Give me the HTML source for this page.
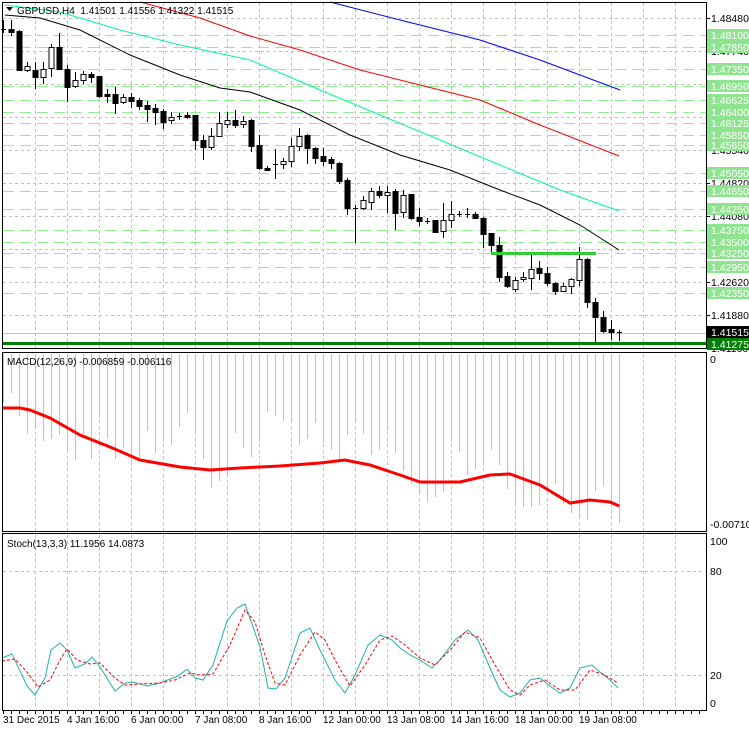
<!DOCTYPE html>
<html><head><meta charset="utf-8"><style>
html,body{margin:0;padding:0;background:#fff;width:749px;height:731px;overflow:hidden}
svg{display:block}
text{font-family:"Liberation Sans",sans-serif;font-size:10px}
text.ax{font-size:10.5px}
</style></head><body>
<svg id="s" width="749" height="731" xmlns="http://www.w3.org/2000/svg"></svg>
<script>
const S=document.getElementById('s');let h='';
const add=s=>h+=s;
const line=(x1,y1,x2,y2,c,w,d)=>add(`<line x1="${x1}" y1="${y1}" x2="${x2}" y2="${y2}" stroke="${c}" stroke-width="${w||1}" ${d?`stroke-dasharray="${d}"`:''}/>`);
const pl=(pts,c,w,d)=>add(`<polyline fill="none" points="${pts.map(p=>p.join(',')).join(' ')}" stroke="${c}" stroke-width="${w||1}" ${d?`stroke-dasharray="${d}"`:''}/>`);
const txt=(x,y,t,c,a)=>add(`<text x="${x}" y="${y}" fill="${c||'#000'}" ${a||''}>${t}</text>`);
const ax=(x,y,t,c)=>txt(x,y,t,c,'class="ax"');
for(let x=35;x<706;x+=32){line(x+.5,3,x+.5,348,'#c0c0c0',1,'3,3');line(x+.5,354,x+.5,531,'#c0c0c0',1,'3,3');line(x+.5,535,x+.5,709,'#c0c0c0',1,'3,3');}
const pr=['1.48480','1.47740','1.47000','1.46260','1.45540','1.44820','1.44080','1.43340','1.42620','1.41880','1.41160'];
pr.forEach((p,i)=>{let y=18+i*33;line(3,y+.5,706,y+.5,'#c0c0c0',1,'3,3');});
const lv=[['1.48100',35],['1.47850',47],['1.47350',69],['1.46950',86],['1.46625',100],['1.46400',112],['1.46125',123],['1.45850',135],['1.45650',145],['1.45050',173],['1.44650',191],['1.44250',209],['1.43750',230],['1.43500',242],['1.43250',253],['1.42950',267],['1.42350',293]];
lv.forEach(l=>line(3,l[1]+.5,706,l[1]+.5,'#90ee90',1,'11,6'));
line(3,333.5,706,333.5,'#c0c0c0',1);
pl([[330,2],[400,20],[480,40],[540,60],[580,75],[620,90]],'#0000ff');
pl([[140,2],[200,18],[250,36],[300,50],[360,70],[420,85],[480,100],[540,125],[619,156]],'#ff0000');
pl([[5,5],[60,12],[120,30],[180,45],[250,60],[320,90],[380,115],[440,140],[500,165],[560,190],[619,211]],'#00fa9a');
pl([[5,15],[40,18],[80,30],[130,55],[180,75],[220,88],[250,92],[300,110],[350,135],[400,155],[450,170],[500,190],[540,205],[580,225],[619,250]],'#000');
const C=[[30,29,20,33],[29,32,20,36],[31,70,30,70],[70,66,62,72],[70,77,62,89],[77,69,62,84],[68,47,44,77],[47,69,33,69],[69,87,65,102],[86,80,72,88],[80,74,71,84],[74,77,72,83],[76,96,76,98],[94,96,89,103],[94,103,87,114],[102,97,94,104],[97,101,93,108],[100,106,98,110],[105,109,101,122],[108,112,104,125],[111,122,109,129],[120,117,112,124],[116,117,113,120],[115,117,112,119],[115,140,115,150],[140,147,135,160],[147,136,128,150],[136,123,112,137],[124,120,112,128],[120,125,110,128],[124,121,116,128],[120,146,119,152],[145,168,135,170],[168,170,166,170],[164,165,149,179],[164,161,158,169],[161,146,138,167],[146,136,128,151],[135,148,134,164],[148,158,147,164],[156,161,148,166],[159,163,157,169],[163,181,162,184],[180,208,178,215],[208,209,205,243],[208,200,196,210],[202,191,188,210],[191,195,186,198],[195,192,186,213],[191,213,189,230],[212,195,190,218],[194,218,194,220],[217,221,208,226],[221,222,218,224],[220,232,220,233],[231,220,203,238],[220,214,201,228],[214,215,211,217],[215,214,208,218],[214,218,212,219],[218,234,217,248],[233,245,233,255],[245,277,237,282],[276,286,272,288],[289,280,277,292],[279,277,272,282],[278,269,255,290],[268,273,261,280],[273,283,267,286],[283,291,282,295],[291,286,283,292],[286,279,278,294],[280,259,247,286],[259,302,258,308],[302,317,298,343],[317,331,311,333],[329,332,320,340],[332,332,330,341]];
C.forEach((c,i)=>{const x=3+8*i;const [o,cl,hi,lo]=c;line(x+.5,hi,x+.5,lo,'#000');const t=Math.min(o,cl),b=Math.max(o,cl);
if(b-t<1.5)line(x-2,t+.5,x+3,t+.5,'#000');else add(`<rect x="${x-2}" y="${t+.5}" width="5" height="${b-t}" fill="${cl<o?'#fff':'#000'}" stroke="#000"/>`);});
line(491,253.5,596,253.5,'#32cd32',3);
line(3,343.5,706,343.5,'#008000',3);
const sig=[[3,408],[20,408],[30,410],[50,418],[80,435],[110,447],[140,460],[180,467],[210,470],[240,468],[280,466],[320,463],[345,460],[370,465],[400,475],[420,482],[460,482],[490,475],[510,474],[540,485],[570,503],[590,500],[610,502],[619,506]];
const sy=x=>{for(let k=1;k<sig.length;k++)if(x<=sig[k][0]){const a=sig[k-1],b=sig[k];return a[1]+(b[1]-a[1])*(x-a[0])/(b[0]-a[0]);}return 506;};
const off=[-5,-15,8,25,14,26,20,12,24,28,-2,20,-25,-8,10,-5,8,0,-30,-10,-25,-20,-40,-55,-35,-10,18,12,5,-35,-20,-10,-25,-55,-50,-45,-45,-20,-25,-40,-20,-12,0,-25,-40,-30,-10,-18,-40,-20,-5,5,12,20,15,10,-40,-30,-5,-10,-15,-25,-10,15,30,28,25,20,0,-10,5,10,15,20,-10,-15,5,17];
for(let i=0;i<78;i++){const x=3+8*i;line(x+.5,354,x+.5,Math.round(sy(x)+off[i]),'#c0c0c0',1);}
pl(sig,'#ff0000',3);
line(3,571.5,706,571.5,'#c0c0c0',1,'3,3');line(3,675.5,706,675.5,'#c0c0c0',1,'3,3');
pl([[2,658],[12,654],[27,686],[35,695],[45,678],[51,650],[60,643],[67,650],[75,668],[85,664],[92,657],[100,667],[115,691],[125,683],[133,682],[147,686],[160,683],[178,676],[187,669],[195,678],[203,680],[213,665],[227,621],[237,608],[245,604],[260,647],[268,688],[276,689],[285,678],[300,633],[310,628],[320,650],[335,680],[345,693],[355,675],[368,645],[380,635],[392,640],[400,648],[410,655],[420,660],[432,668],[440,660],[455,640],[468,630],[478,640],[490,668],[500,690],[510,697],[520,693],[530,680],[540,678],[550,686],[560,693],[570,688],[580,668],[592,665],[600,672],[610,680],[618,688]],'#20b2aa');
pl([[2,661],[15,659],[27,672],[38,687],[50,680],[60,660],[67,649],[77,660],[90,664],[100,663],[115,678],[125,685],[140,684],[160,683],[175,680],[190,673],[200,675],[213,674],[230,645],[245,610],[255,622],[265,655],[275,683],[285,685],[300,655],[315,632],[325,640],[335,660],[350,686],[365,665],[380,640],[392,636],[405,645],[420,658],[435,665],[450,650],[465,632],[480,638],[495,665],[510,690],[520,695],[530,685],[545,680],[560,690],[575,690],[590,670],[605,675],[618,683]],'#ff0000',1,'3,2');
add('<rect x="2.5" y="2.5" width="704" height="346" fill="none" stroke="#000"/>');
add('<rect x="2.5" y="352.5" width="704" height="179" fill="none" stroke="#000"/>');
add('<rect x="2.5" y="533.5" width="704" height="177" fill="none" stroke="#000"/>');
pr.forEach((p,i)=>{let y=18+i*33;line(706,y+.5,710,y+.5,'#000');ax(711,y+4,p);});
lv.forEach(l=>{add(`<rect x="707" y="${l[1]-6}" width="42" height="12" fill="#8fe48f"/>`);ax(711,l[1]+4,l[0],'#fff');});
add('<rect x="707" y="326" width="42" height="12" fill="#000"/>');ax(711,336,'1.41515','#fff');
add('<rect x="707" y="338" width="42" height="12" fill="#008000"/>');ax(711,348,'1.41275','#fff');
ax(710,363,'0');ax(710,528,'-0.007103');
ax(710,545,'100');ax(710,575,'80');ax(710,679,'20');ax(710,707,'0');
add('<polygon points="6,7 13,7 9.5,11" fill="#000"/>');
txt(17,14,'GBPUSD,H4&#160;&#160;1.41501 1.41556 1.41322 1.41515');
txt(7,365,'MACD(12,26,9) -0.006859 -0.006116');
txt(7,547,'Stoch(13,3,3) 11.1956 14.0873');
const tl=['31 Dec 2015','4 Jan 16:00','6 Jan 00:00','7 Jan 08:00','8 Jan 16:00','12 Jan 00:00','13 Jan 08:00','14 Jan 16:00','18 Jan 00:00','19 Jan 08:00'];
for(let x=3;x<706;x+=8)line(x+.5,711,x+.5,714,'#000');
tl.forEach((t,i)=>{const x=i==0?3:3+64*i;txt(x,723,t);});
S.innerHTML=h;
</script>
</body></html>
